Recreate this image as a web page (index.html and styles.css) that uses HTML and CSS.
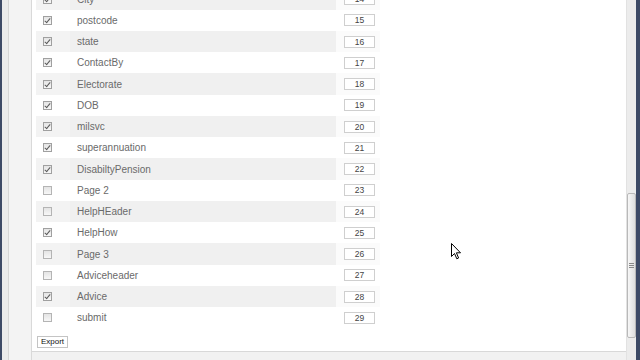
FILE: index.html
```html
<!DOCTYPE html>
<html>
<head>
<meta charset="utf-8">
<link rel="stylesheet" href="styles.css">
</head>
<body>
<div class="window">
  <div class="edge"></div>
  <div class="gutter"></div>
  <div class="sidebar"></div>
  <div class="viewport">
    <div class="panel">
      <div class="table">
        <div class="row shade"><div class="c-check"><span class="cb on"></span></div><div class="c-label">City</div><div class="c-num"><span class="num">14</span></div></div>
        <div class="row"><div class="c-check"><span class="cb on"></span></div><div class="c-label">postcode</div><div class="c-num"><span class="num">15</span></div></div>
        <div class="row shade"><div class="c-check"><span class="cb on"></span></div><div class="c-label">state</div><div class="c-num"><span class="num">16</span></div></div>
        <div class="row"><div class="c-check"><span class="cb on"></span></div><div class="c-label">ContactBy</div><div class="c-num"><span class="num">17</span></div></div>
        <div class="row shade"><div class="c-check"><span class="cb on"></span></div><div class="c-label">Electorate</div><div class="c-num"><span class="num">18</span></div></div>
        <div class="row"><div class="c-check"><span class="cb on"></span></div><div class="c-label">DOB</div><div class="c-num"><span class="num">19</span></div></div>
        <div class="row shade"><div class="c-check"><span class="cb on"></span></div><div class="c-label">milsvc</div><div class="c-num"><span class="num">20</span></div></div>
        <div class="row"><div class="c-check"><span class="cb on"></span></div><div class="c-label">superannuation</div><div class="c-num"><span class="num">21</span></div></div>
        <div class="row shade"><div class="c-check"><span class="cb on"></span></div><div class="c-label">DisabiltyPension</div><div class="c-num"><span class="num">22</span></div></div>
        <div class="row"><div class="c-check"><span class="cb"></span></div><div class="c-label">Page 2</div><div class="c-num"><span class="num">23</span></div></div>
        <div class="row shade"><div class="c-check"><span class="cb"></span></div><div class="c-label">HelpHEader</div><div class="c-num"><span class="num">24</span></div></div>
        <div class="row"><div class="c-check"><span class="cb on"></span></div><div class="c-label">HelpHow</div><div class="c-num"><span class="num">25</span></div></div>
        <div class="row shade"><div class="c-check"><span class="cb"></span></div><div class="c-label">Page 3</div><div class="c-num"><span class="num">26</span></div></div>
        <div class="row"><div class="c-check"><span class="cb"></span></div><div class="c-label">Adviceheader</div><div class="c-num"><span class="num">27</span></div></div>
        <div class="row shade"><div class="c-check"><span class="cb on"></span></div><div class="c-label">Advice</div><div class="c-num"><span class="num">28</span></div></div>
        <div class="row"><div class="c-check"><span class="cb"></span></div><div class="c-label">submit</div><div class="c-num"><span class="num">29</span></div></div>
      </div>
      <div class="actions"><button class="export">Export</button></div>
    </div>
    <div class="bottom"></div>
  </div>
  <div class="scrollbar">
    <div class="thumb"><span class="grip"></span></div>
  </div>
  <div class="edge right"></div>
  <svg class="cursor" width="12" height="18" viewBox="0 0 12 18"><path d="M0.5 0.5 L0.5 13.5 L3.5 10.5 L5.8 15.8 L7.6 15 L5.4 9.8 L9.5 9.8 Z" fill="#fff" stroke="#000" stroke-width="1" stroke-linejoin="round"/></svg>
</div>
</body>
</html>
```

FILE: styles.css
```css
* { box-sizing: border-box; }
html, body { margin: 0; padding: 0; }
body {
  width: 640px;
  height: 360px;
  overflow: hidden;
  background: #f0f0f0;
  font-family: Arial, "Liberation Sans", sans-serif;
}
.window {
  position: relative;
  display: flex;
  height: 360px;
  width: 640px;
}
.edge {
  width: 2px;
  background: #3d4a66;
  flex: none;
}
.edge.right {
  width: 4px;
  background: #3d4a66;
}
.gutter {
  width: 7px;
  flex: none;
  background: #ebebeb;
  border-right: 1px solid #d6d6d6;
}
.sidebar {
  width: 23px;
  flex: none;
  background: #f3f3f3;
  border-right: 1px solid #d9d9d9;
}
.viewport {
  flex: 1;
  display: flex;
  flex-direction: column;
  overflow: hidden;
}
.panel {
  height: 352px;
  flex: none;
  background: #fff;
  border-bottom: 1px solid #d8d8d8;
  padding-left: 4px;
  overflow: hidden;
}
.bottom {
  flex: 1;
  background: #f1f1f1;
}
.table {
  margin-top: -11.6px;
  width: 344px;
}
.row {
  display: flex;
  height: 21.25px;
  align-items: center;
}
.row.shade { background: #f0f0f0; }
.row.shade .c-check { background: #f3f3f3; }
.row.shade .c-num { background: #fbfbfb; }
.c-check {
  width: 34px;
  height: 100%;
  display: flex;
  align-items: center;
  padding-left: 7px;
}
.c-label {
  width: 266px;
  height: 100%;
  display: flex;
  align-items: center;
  padding-left: 7px;
  font-size: 10px;
  color: #6a6a6a;
}
.c-num {
  width: 44px;
  height: 100%;
  display: flex;
  align-items: center;
  padding-left: 8px;
}
.num {
  display: block;
  width: 31px;
  height: 12px;
  border: 1px solid #cfcfcf;
  background: #fff;
  font-size: 8.5px;
  line-height: 10px;
  text-align: center;
  color: #444;
}
.cb {
  display: block;
  width: 9px;
  height: 9px;
  border: 1px solid #b4b4b4;
  background: linear-gradient(#e4e4e4, #f7f7f7);
  position: relative;
}
.cb.on {
  border-color: #a0a0a0;
}
.cb.on::after {
  content: "";
  position: absolute;
  left: 2px;
  top: 0px;
  width: 2px;
  height: 5px;
  border-right: 1.5px solid #5a5a5a;
  border-bottom: 1.5px solid #5a5a5a;
  transform: rotate(40deg);
}
.actions {
  padding: 8px 0 0 1px;
}
.export {
  display: block;
  width: 31px;
  height: 12px;
  padding: 0;
  border: 1px solid #c4c4c4;
  background: #fff;
  font-family: Arial, "Liberation Sans", sans-serif;
  font-size: 8px;
  line-height: 10px;
  color: #111;
}
.scrollbar {
  width: 10px;
  flex: none;
  background: #ececec;
  border-left: 1px solid #e2e2e2;
  display: flex;
  flex-direction: column;
}
.thumb {
  margin-top: 193px;
  height: 145px;
  border: 1px solid #b9b9b9;
  border-radius: 2px;
  background: linear-gradient(to right, #f7f7f7, #dedede);
  display: flex;
  align-items: center;
  justify-content: center;
}
.grip {
  display: block;
  width: 5px;
  height: 5px;
  border-top: 1px solid #888;
  border-bottom: 1px solid #888;
  background: linear-gradient(#888, #888) center / 5px 1px no-repeat;
}
.cursor {
  position: absolute;
  left: 451px;
  top: 243px;
}
```
